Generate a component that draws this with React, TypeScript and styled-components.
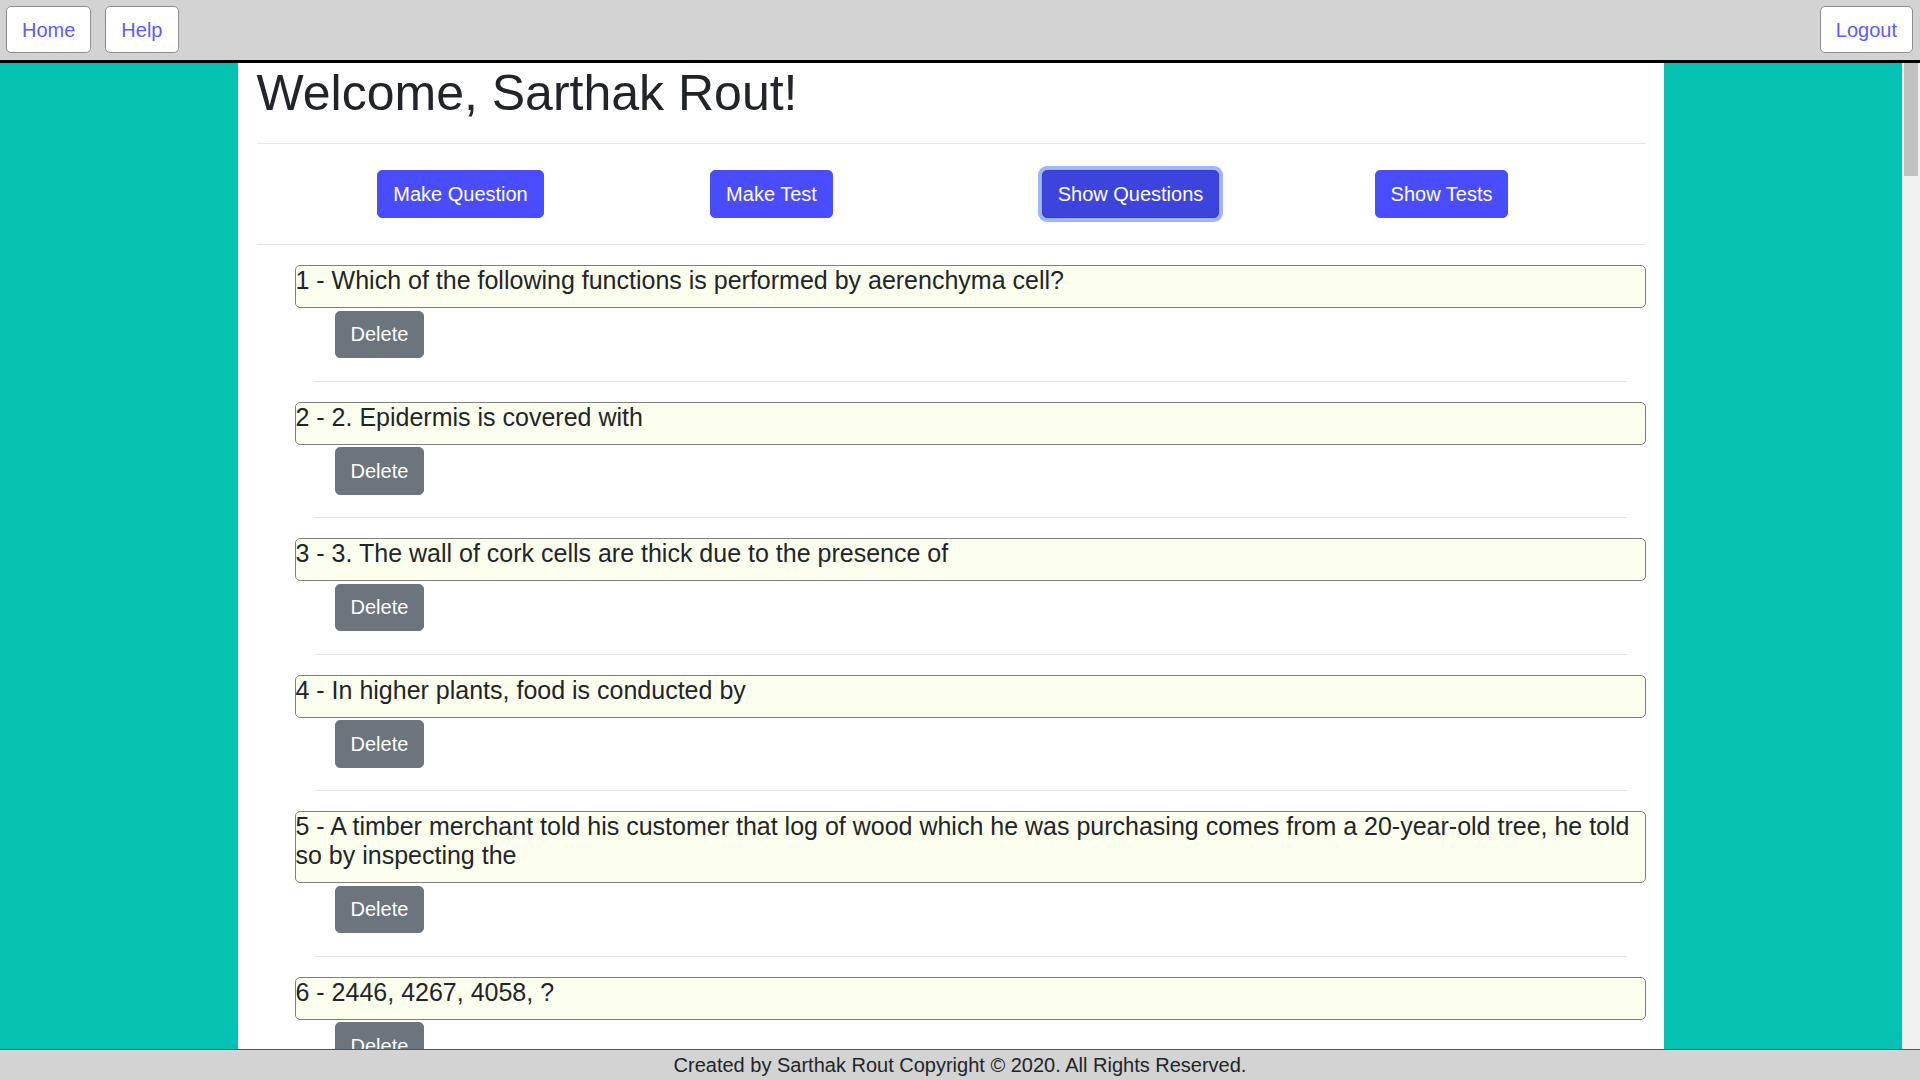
import React from "react";
import styled, { createGlobalStyle } from "styled-components";

const questions = [
  "Which of the following functions is performed by aerenchyma cell?",
  "2. Epidermis is covered with",
  "3. The wall of cork cells are thick due to the presence of",
  "In higher plants, food is conducted by",
  "A timber merchant told his customer that log of wood which he was purchasing comes from a 20-year-old tree, he told so by inspecting the",
  "2446, 4267, 4058, ?",
];

const actions = ["Make Question", "Make Test", "Show Questions", "Show Tests"];

const App = () => {
  return (
    <>
      <GlobalStyle />
      <Page>
        <TopBar>
          <NavGroup>
            <NavButton>Home</NavButton>
            <NavButton>Help</NavButton>
          </NavGroup>
          <NavButton>Logout</NavButton>
        </TopBar>
        <Body>
          <Scroller>
            <Panel>
              <Title>Welcome, Sarthak Rout!</Title>
              <Rule />
              <ActionRow>
                {actions.map((label) => (
                  <ActionButton key={label} $active={label === "Show Questions"}>
                    {label}
                  </ActionButton>
                ))}
              </ActionRow>
              <Rule />
              <QuestionList>
                {questions.map((q, i) => (
                  <QuestionItem key={i}>
                    <QuestionText>{`${i + 1} - ${q}`}</QuestionText>
                    <DeleteButton>Delete</DeleteButton>
                    <ItemRule />
                  </QuestionItem>
                ))}
              </QuestionList>
            </Panel>
          </Scroller>
          <ScrollTrack>
            <ScrollThumb />
          </ScrollTrack>
        </Body>
        <Footer>Created by Sarthak Rout Copyright © 2020. All Rights Reserved.</Footer>
      </Page>
    </>
  );
};

const GlobalStyle = createGlobalStyle`
  * {
    box-sizing: border-box;
  }

  html,
  body {
    margin: 0;
    padding: 0;
    height: 100%;
    overflow: hidden;
  }

  body {
    font-family: "Liberation Sans", Arial, sans-serif;
    font-size: 20px;
    line-height: 1.5;
    color: #212529;
  }

  #root {
    height: 100%;
  }
`;

const Page = styled.div`
  height: 100vh;
  display: flex;
  flex-direction: column;
`;

const TopBar = styled.header`
  flex: none;
  height: 63px;
  display: flex;
  justify-content: space-between;
  align-items: flex-start;
  padding: 6px 7px 0 6px;
  background-color: #d3d3d3;
  border-bottom: 3px solid #000;
`;

const NavGroup = styled.div`
  display: flex;
  gap: 14px;
`;

const NavButton = styled.button`
  height: 47px;
  padding: 0 15px;
  font-family: inherit;
  font-size: 20px;
  line-height: 30px;
  color: #5b5bff;
  background-color: #fff;
  border: 1px solid #8c8c8c;
  border-radius: 5px;
  cursor: pointer;
`;

const Body = styled.div`
  flex: 1;
  min-height: 0;
  display: flex;
`;

const Scroller = styled.main`
  flex: 1;
  min-width: 0;
  overflow-y: auto;
  scrollbar-width: none;
  background-color: #02c3b1;
`;

const ScrollTrack = styled.div`
  flex: none;
  width: 18px;
  padding: 0 2px;
  background-color: #f0f0f0;
`;

const ScrollThumb = styled.div`
  height: 113px;
  background-color: #c1c1c1;
`;

const Panel = styled.div`
  width: 75%;
  margin: 0 auto;
  padding: 0 18.75px;
  background-color: #fff;
  overflow: hidden;
`;

const Title = styled.h1`
  margin: 0 0 10px;
  font-size: 50px;
  font-weight: 500;
  line-height: 60px;
`;

const Rule = styled.hr`
  margin: 20px 0;
  border: 0;
  border-top: 1px solid rgba(0, 0, 0, 0.1);
`;

const ActionRow = styled.div`
  display: grid;
  grid-template-columns: 263px 359px 359px 263px;
  justify-content: center;
  justify-items: center;
  padding: 6px 0;
`;

const ActionButton = styled.button<{ $active?: boolean }>`
  height: 48px;
  padding: 0 15px;
  font-family: inherit;
  font-size: 20px;
  line-height: 30px;
  color: #fff;
  background-color: ${(p) => (p.$active ? "#3c44dd" : "#4a4cff")};
  border: 1px solid ${(p) => (p.$active ? "#343cd2" : "#4a4cff")};
  border-radius: 5px;
  box-shadow: ${(p) => (p.$active ? "0 0 0 4px #a0b4f8" : "none")};
  cursor: pointer;
`;

const QuestionList = styled.ul`
  margin: 0;
  padding: 0 0 0 38px;
  list-style: none;
`;

const QuestionItem = styled.li`
  display: block;
`;

const QuestionText = styled.div`
  padding: 0 0 12px;
  font-size: 25px;
  line-height: normal;
  background-color: #fdffee;
  border: 1px solid #808080;
  border-radius: 5px;
`;

const DeleteButton = styled.button`
  display: block;
  width: fit-content;
  height: 47.5px;
  margin: 2.5px 0 0 40px;
  padding: 0 15px;
  font-family: inherit;
  font-size: 20px;
  line-height: 30px;
  color: #fff;
  background-color: #6c757d;
  border: 1px solid #6c757d;
  border-radius: 5px;
  cursor: pointer;
`;

const ItemRule = styled.hr`
  margin: 22.5px 19px 20px;
  border: 0;
  border-top: 1px solid rgba(0, 0, 0, 0.1);
`;

const Footer = styled.footer`
  flex: none;
  height: 31px;
  text-align: center;
  font-size: 20px;
  line-height: 30px;
  color: #212529;
  background-color: #d3d3d3;
  border-top: 1px solid #555;
`;

export default App;
